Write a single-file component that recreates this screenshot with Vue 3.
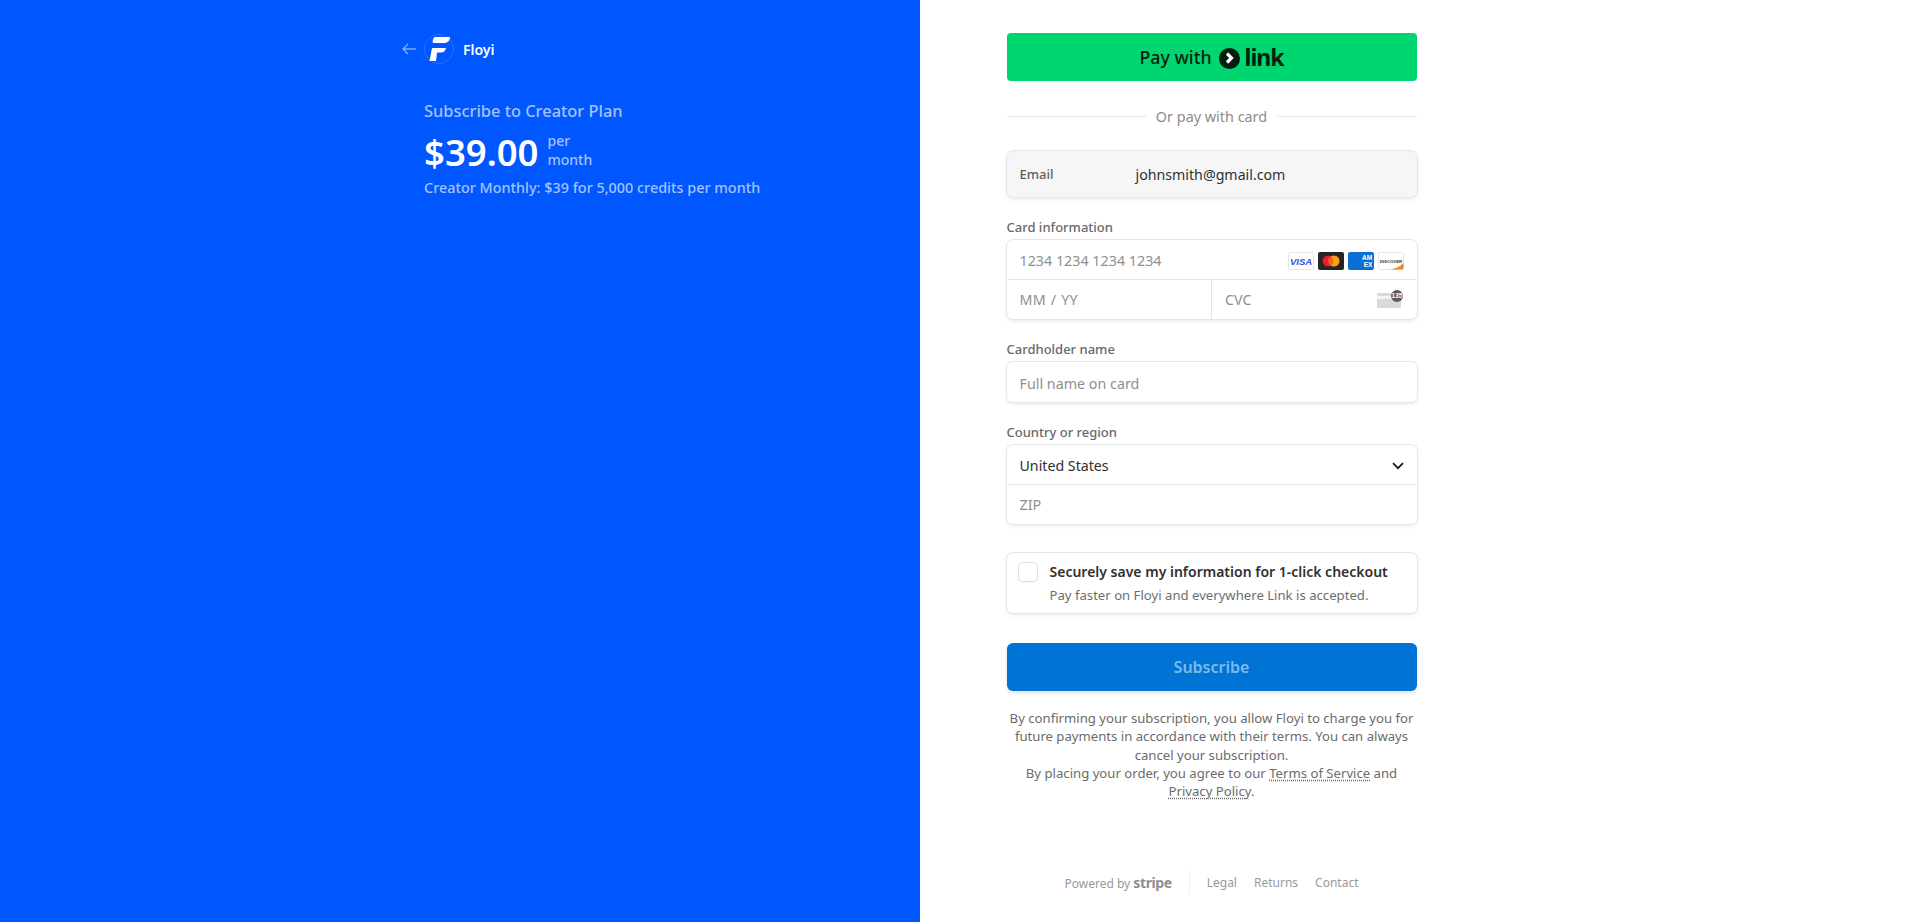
<template>
  <div class="page">
    <section class="left">
      <div class="brand">
        <svg class="back" width="14" height="12" viewBox="0 0 14 12" fill="none">
          <path d="M6 1 1 6l5 5M1.5 6H14" stroke="#7fa9ff" stroke-width="1.4" />
        </svg>
        <div class="logo">
          <svg width="24" height="24" viewBox="0 0 24 24" fill="#fff">
            <path d="M7 .5C7.300 0 7.600 0 8 0h15c-.2 3.500-2 6-6 6H6.500C5.200 6 5.500 3 7 .5z" />
            <path d="M5 11h14c-.5 2.500-2 4.500-5 4.500h-4L9 24H2.500z" />
          </svg>
        </div>
        <span class="brand-name">Floyi</span>
      </div>
      <div class="summary">
        <div class="plan">Subscribe to Creator Plan</div>
        <div class="price-row">
          <span class="price">$39.00</span>
          <span class="per">per<br />month</span>
        </div>
        <div class="desc">Creator Monthly: $39 for 5,000 credits per month</div>
      </div>
    </section>

    <section class="right">
      <div class="form">
        <button class="link-btn">
          <span>Pay with</span>
          <span class="link-dot">
            <svg width="11" height="12" viewBox="0 0 11 12" fill="none">
              <path d="M3 1.500 7.500 6 3 10.500" stroke="#fff" stroke-width="3.200" />
            </svg>
          </span>
          <span class="link-word">link</span>
        </button>

        <div class="divider"><span>Or pay with card</span></div>

        <div class="email-box">
          <span class="email-label">Email</span>
          <span class="email-value">johnsmith@gmail.com</span>
        </div>

        <label class="field-label">Card information</label>
        <div class="box">
          <div class="row">
            <span class="ph">1234 1234 1234 1234</span>
            <div class="brands">
              <svg width="26" height="18" viewBox="0 0 26 18">
                <rect x=".5" y=".5" width="25" height="17" rx="2" fill="#fff" stroke="#e6e6e6" />
                <text x="13" y="12.500" text-anchor="middle" class="visa">VISA</text>
              </svg>
              <svg width="26" height="18" viewBox="0 0 26 18">
                <rect width="26" height="18" rx="2" fill="#252525" />
                <circle cx="10" cy="9" r="5.500" fill="#eb1c26" />
                <circle cx="16" cy="9" r="5.500" fill="#f99d1c" />
                <path d="M13 4.400a5.500 5.500 0 0 1 0 9.200 5.500 5.500 0 0 1 0-9.200z" fill="#f2611f" />
              </svg>
              <svg width="26" height="18" viewBox="0 0 26 18">
                <rect width="26" height="18" rx="2" fill="#0a70d6" />
                <text x="19" y="8" text-anchor="middle" class="amex">AM</text>
                <text x="20" y="15" text-anchor="middle" class="amex">EX</text>
              </svg>
              <svg width="26" height="18" viewBox="0 0 26 18">
                <rect x=".5" y=".5" width="25" height="17" rx="2" fill="#fff" stroke="#e6e6e6" />
                <path d="M12 17.500c6-1 10.500-3 13.500-6.500v5a1.500 1.500 0 0 1-1.500 1.500z" fill="#f58220" />
                <text x="13" y="10.500" text-anchor="middle" class="disc">DISCOVER</text>
              </svg>
            </div>
          </div>
          <div class="row-split">
            <div class="cell"><span class="ph spaced">MM / YY</span></div>
            <div class="cell">
              <span class="ph">CVC</span>
              <svg class="cvc" width="27" height="19" viewBox="0 0 27 19">
                <rect y="3" width="24" height="15" rx="1.500" fill="#d9d9d9" />
                <rect y="6" width="24" height="3" fill="#f3f3f3" />
                <circle cx="20" cy="6" r="6" fill="#5c5c5c" />
                <text x="20" y="8.300" text-anchor="middle" class="cvc-num">135</text>
              </svg>
            </div>
          </div>
        </div>

        <label class="field-label">Cardholder name</label>
        <div class="box">
          <div class="row single"><span class="ph">Full name on card</span></div>
        </div>

        <label class="field-label">Country or region</label>
        <div class="box">
          <div class="row">
            <span class="value">United States</span>
            <svg class="chevron" width="12" height="8" viewBox="0 0 12 8" fill="none">
              <path d="M1 1.200 6 6.200l5-5" stroke="#1a1a1a" stroke-width="1.800" />
            </svg>
          </div>
          <div class="row"><span class="ph">ZIP</span></div>
        </div>

        <div class="save-box">
          <span class="checkbox"></span>
          <div>
            <div class="save-title">Securely save my information for 1-click checkout</div>
            <div class="save-sub">Pay faster on Floyi and everywhere Link is accepted.</div>
          </div>
        </div>

        <button class="subscribe">Subscribe</button>

        <p class="legal">
          By confirming your subscription, you allow Floyi to charge you for future payments in accordance with their terms. You can always cancel your subscription.<br />
          By placing your order, you agree to our <a>Terms of Service</a> and <a>Privacy Policy</a>.
        </p>

        <div class="footer">
          <span class="powered">Powered by <b>stripe</b></span>
          <span class="sep"></span>
          <span>Legal</span>
          <span>Returns</span>
          <span>Contact</span>
        </div>
      </div>
    </section>
  </div>
</template>

<script setup>
</script>

<style>
body {
  margin: 0;
  background: #fff;
}
</style>

<style scoped>
.page {
  display: flex;
  height: 922px;
  overflow: hidden;
  font-family: "Noto Sans", "Open Sans", sans-serif;
}
.left {
  width: 920px;
  box-sizing: border-box;
  background: #0057ff;
  padding: 34px 0 0 402px;
  color: #fff;
}
.brand {
  display: flex;
  align-items: center;
  height: 30px;
}
.back {
  margin-right: 8px;
}
.logo {
  width: 30px;
  height: 30px;
  box-sizing: border-box;
  border: 1px solid #2a72ff;
  border-radius: 50%;
  display: flex;
  align-items: center;
  justify-content: center;
}
.brand-name {
  margin-left: 9px;
  font-size: 14px;
  font-weight: 600;
}
.summary {
  margin: 35px 0 0 22px;
}
.plan {
  font-size: 16.400px;
  line-height: 24px;
  font-weight: 500;
  color: #a3c2ff;
}
.price-row {
  display: flex;
  align-items: center;
  margin-top: 6px;
  height: 46px;
}
.price {
  font-size: 36.500px;
  line-height: 46px;
  font-weight: 600;
}
.per {
  margin: -5px 0 0 9px;
  font-size: 14px;
  line-height: 19px;
  font-weight: 500;
  color: #a3c2ff;
}
.desc {
  margin-top: 3px;
  font-size: 14.400px;
  line-height: 20px;
  font-weight: 500;
  color: #a3c2ff;
}
.right {
  flex: 1;
  padding: 33px 0 0 86.500px;
}
.form {
  width: 410px;
}
.link-btn {
  width: 100%;
  height: 48px;
  border: none;
  border-radius: 4px;
  background: #00d66f;
  display: flex;
  align-items: center;
  justify-content: center;
  gap: 7px;
  font-family: inherit;
  font-size: 17.800px;
  font-weight: 500;
  color: #011e0f;
}
.link-dot {
  width: 21px;
  height: 21px;
  border-radius: 50%;
  background: #011e0f;
  display: flex;
  align-items: center;
  justify-content: center;
  margin-top: 2px;
}
.link-word {
  margin-left: -2px;
  font-size: 23px;
  font-weight: 700;
  letter-spacing: -1px;
  line-height: 24px;
}
.divider {
  display: flex;
  align-items: center;
  gap: 10px;
  margin-top: 24px;
  height: 22px;
  font-size: 14.400px;
  color: #8c8c8c;
}
.divider::before,
.divider::after {
  content: "";
  flex: 1;
  height: 1px;
  background: #e6e6e6;
}
.email-box {
  display: flex;
  align-items: center;
  height: 46px;
  margin-top: 24px;
  box-sizing: border-box;
  padding-left: 13px;
  background: #f6f6f6;
  border-radius: 6px;
  box-shadow: 0 0 0 1px #e6e6e6, 0 2px 4px rgba(0, 0, 0, 0.09);
}
.email-label {
  width: 116px;
  font-size: 13px;
  font-weight: 500;
  color: #5f5f5f;
}
.email-value {
  font-size: 14.200px;
  color: #303030;
}
.field-label {
  display: block;
  margin-top: 21px;
  height: 22px;
  font-size: 13px;
  line-height: 18px;
  font-weight: 500;
  color: #696969;
}
.box {
  border-radius: 6px;
  box-shadow: 0 0 0 1px #e6e6e6, 0 2px 4px rgba(0, 0, 0, 0.09);
  background: #fff;
}
.row {
  height: 39px;
  display: flex;
  align-items: center;
  justify-content: space-between;
  padding: 0 13px;
}
.row:first-child {
  box-sizing: border-box;
  padding-top: 2px;
}
.row + .row,
.row + .row-split {
  border-top: 1px solid #e6e6e6;
}
.row.single {
  height: 40px;
}
.row-split {
  display: flex;
  height: 39px;
}
.cell {
  flex: 1;
  display: flex;
  align-items: center;
  justify-content: space-between;
  padding: 0 13px;
}
.cell + .cell {
  border-left: 1px solid #e6e6e6;
}
.ph {
  font-size: 14.300px;
  color: #8f8f8f;
}
.ph.spaced {
  word-spacing: 1px;
  letter-spacing: 0.2px;
}
.value {
  font-size: 14.200px;
  color: #303030;
}
.brands {
  display: flex;
  gap: 4px;
}
.visa {
  font: italic 700 9.500px "Liberation Sans", sans-serif;
  fill: #3350e0;
}
.amex {
  font: 700 6.500px "Liberation Sans", sans-serif;
  fill: #fff;
}
.disc {
  font: 700 4.300px "Liberation Sans", sans-serif;
  fill: #333;
}
.cvc-num {
  font: 700 6.500px "Liberation Sans", sans-serif;
  fill: #fff;
}
.save-box {
  display: flex;
  height: 60px;
  margin-top: 29px;
  box-sizing: border-box;
  padding: 9px 0 0 12px;
  border-radius: 6px;
  box-shadow: 0 0 0 1px #e6e6e6, 0 2px 4px rgba(0, 0, 0, 0.09);
}
.checkbox {
  flex: none;
  width: 18px;
  height: 18px;
  margin: 1px 13px 0 0;
  border-radius: 4px;
  background: #fff;
  box-shadow: 0 0 0 1px #e0e0e0, 0 1px 2px rgba(0, 0, 0, 0.12);
}
.save-title {
  font-size: 14px;
  line-height: 19px;
  font-weight: 600;
  color: #303030;
  white-space: nowrap;
}
.save-sub {
  margin-top: 6px;
  font-size: 13.150px;
  line-height: 17px;
  color: #6e6e6e;
  white-space: nowrap;
}
.subscribe {
  display: block;
  width: 100%;
  height: 48px;
  margin-top: 30px;
  border: none;
  border-radius: 6px;
  background: #0074d4;
  font-family: inherit;
  font-size: 16px;
  font-weight: 600;
  color: #7fb9ea;
  box-shadow: 0 2px 4px rgba(0, 0, 0, 0.12);
}
.legal {
  margin: 18px 0 0;
  font-size: 13.150px;
  line-height: 18.300px;
  text-align: center;
  color: #6b6b6b;
}
.legal a {
  text-decoration: underline dotted;
  text-underline-offset: 2px;
}
.footer {
  display: flex;
  align-items: center;
  justify-content: center;
  gap: 17px;
  margin-top: 70px;
  height: 24px;
  font-size: 12px;
  color: #9a9a9a;
}
.footer b {
  font-size: 14px;
  letter-spacing: -0.4px;
  color: #8f8f8f;
}
.sep {
  width: 1px;
  height: 24px;
  background: #eeeeee;
}
</style>
